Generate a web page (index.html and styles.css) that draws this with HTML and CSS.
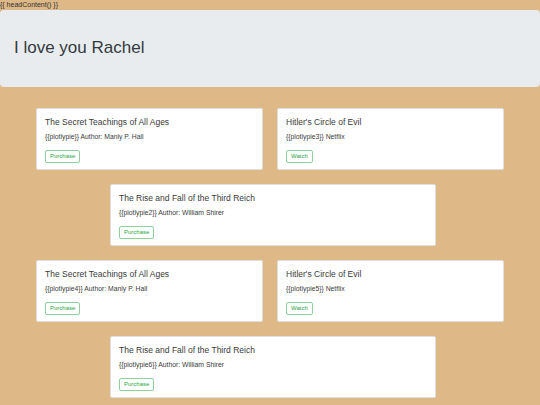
FILE: index.html
```html
<!DOCTYPE html>
<html lang="en">
<head>
    <meta charset="UTF-8">
    <meta name="viewport" content="width=device-width, initial-scale=1.0">
    <title>I love you Rachel</title>
    <link rel="stylesheet" href="styles.css">
</head>
<body>
    <div class="head-content">{{ headContent() }}</div>
    <div class="jumbotron">
        <h1>I love you Rachel</h1>
    </div>
    <div class="cards">
        <div class="row">
            <div class="card">
                <h5>The Secret Teachings of All Ages</h5>
                <p>{{plotlypie}} Author: Manly P. Hall</p>
                <a class="btn" href="#">Purchase</a>
            </div>
            <div class="card">
                <h5>Hitler's Circle of Evil</h5>
                <p>{{plotlypie3}} Netflix</p>
                <a class="btn" href="#">Watch</a>
            </div>
        </div>
        <div class="row single">
            <div class="card wide">
                <h5>The Rise and Fall of the Third Reich</h5>
                <p>{{plotlypie2}} Author: William Shirer</p>
                <a class="btn" href="#">Purchase</a>
            </div>
        </div>
        <div class="row">
            <div class="card">
                <h5>The Secret Teachings of All Ages</h5>
                <p>{{plotlypie4}} Author: Manly P. Hall</p>
                <a class="btn" href="#">Purchase</a>
            </div>
            <div class="card">
                <h5>Hitler's Circle of Evil</h5>
                <p>{{plotlypie5}} Netflix</p>
                <a class="btn" href="#">Watch</a>
            </div>
        </div>
        <div class="row single">
            <div class="card wide">
                <h5>The Rise and Fall of the Third Reich</h5>
                <p>{{plotlypie6}} Author: William Shirer</p>
                <a class="btn" href="#">Purchase</a>
            </div>
        </div>
    </div>
</body>
</html>
```

FILE: styles.css
```css
* {
    margin: 0;
    padding: 0;
    box-sizing: border-box;
}

body {
    font-family: "Liberation Sans", Arial, sans-serif;
    background: #deb887;
    color: #212529;
    overflow: hidden;
    height: 100vh;
}

.head-content {
    font-size: 7px;
    line-height: 10px;
    height: 10px;
    color: #333;
}

.jumbotron {
    display: flex;
    align-items: center;
    height: 77px;
    padding-left: 14px;
    background: #e9ecef;
    border-radius: 4px;
}

.jumbotron h1 {
    font-size: 17px;
    font-weight: 400;
    color: #343a40;
    padding-bottom: 1px;
}

.cards {
    display: flex;
    flex-direction: column;
    gap: 14px;
    padding-top: 21px;
}

.row {
    display: flex;
    justify-content: center;
    gap: 14px;
}

.row.single {
    padding-left: 6px;
}

.card {
    width: 227px;
    height: 62px;
    padding: 8px 8px;
    background: #fff;
    border: 1px solid rgba(0, 0, 0, 0.125);
    border-radius: 2px;
}

.card.wide {
    width: 326px;
}

.card h5 {
    font-size: 8.5px;
    font-weight: 400;
    line-height: 10px;
    color: #3a3a3a;
    margin-bottom: 6px;
}

.card p {
    font-size: 6.8px;
    line-height: 8px;
    color: #3a3a3a;
    margin-bottom: 9px;
}

.btn {
    display: block;
    width: fit-content;
    font-size: 6px;
    line-height: 11px;
    padding: 0 4px;
    color: #28a745;
    border: 1px solid #8fd19e;
    border-radius: 2px;
    text-decoration: none;
}
```
